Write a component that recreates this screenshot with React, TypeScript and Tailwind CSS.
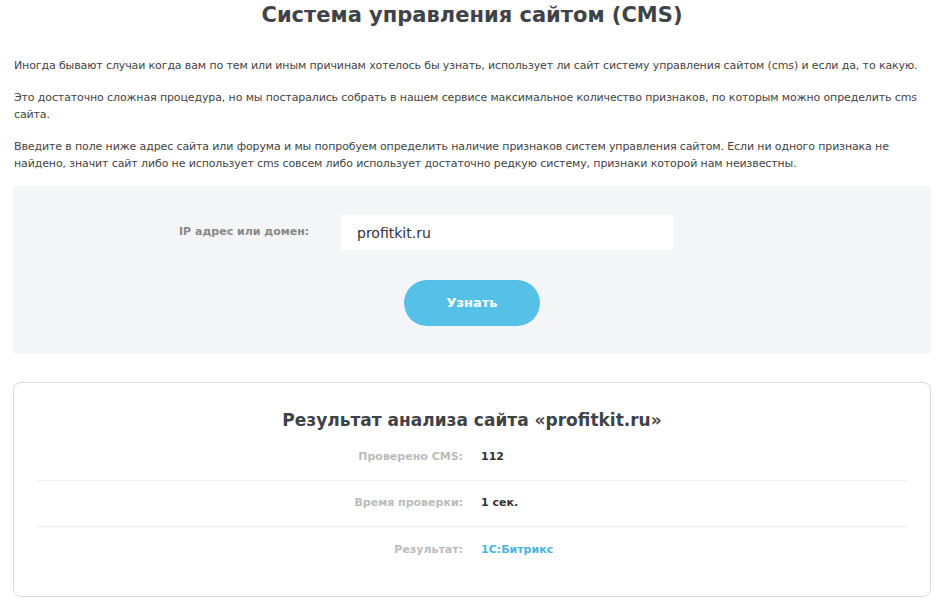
import { useState } from 'react'

const font = { fontFamily: '"DejaVu Sans", "Open Sans", sans-serif' }

const rows = [
  { label: 'Проверено CMS:', value: '112', link: false },
  { label: 'Время проверки:', value: '1 сек.', link: false },
  { label: 'Результат:', value: '1С:Битрикс', link: true },
]

export default function App() {
  const [domain, setDomain] = useState('profitkit.ru')

  return (
    <div className="min-h-screen bg-white text-[#444]" style={font}>
      <div className="pl-[13px] pr-[9px]">
        <h1 className="pt-[1px] text-center text-[21px] font-bold leading-[28px] text-[#3f4247]">
          Система управления сайтом (CMS)
        </h1>

        <div className="mt-[28px] flex flex-col gap-[15px] pl-[1px] pr-[4px] text-[11px] leading-[17px] tracking-[-0.12px] text-[#444]">
          <p>
            Иногда бывают случаи когда вам по тем или иным причинам хотелось бы узнать, использует ли
            сайт систему управления сайтом (cms) и если да, то какую.
          </p>
          <p>
            Это достаточно сложная процедура, но мы постарались собрать в нашем сервисе максимальное
            количество признаков, по которым можно определить cms сайта.
          </p>
          <p>
            Введите в поле ниже адрес сайта или форума и мы попробуем определить наличие признаков систем
            управления сайтом. Если ни одного признака не найдено, значит сайт либо не использует cms
            совсем либо использует достаточно редкую систему, признаки которой нам неизвестны.
          </p>
        </div>

        <div className="mt-[14px] flex flex-col items-center rounded-[4px] bg-[#f4f5f6] pt-[29px] pb-[28px]">
          <div className="flex items-center self-start pl-[166px]">
            <label className="w-[162px] text-[11px] font-semibold text-[#888]">IP адрес или домен:</label>
            <input
              value={domain}
              onChange={(e) => setDomain(e.target.value)}
              className="h-[35px] w-[332px] bg-white px-[16px] text-[14px] text-[#333] outline-none"
            />
          </div>
          <button className="mt-[30px] h-[46px] w-[136px] rounded-full bg-[#56c1e7] text-[13px] font-bold text-white">
            Узнать
          </button>
        </div>

        <div className="mt-[28px] rounded-[8px] border border-[#dcdcdc] bg-white px-[23px] pt-[24px] pb-[23px]">
          <h2 className="text-center text-[17px] font-bold leading-[26px] text-[#3f4247]">
            Результат анализа сайта «profitkit.ru»
          </h2>
          <div className="mt-[2px] flex flex-col">
            {rows.map((row, i) => (
              <div
                key={i}
                className={
                  i < rows.length - 1
                    ? 'flex h-[46px] items-center border-b border-[#eeeeee]'
                    : 'flex h-[46px] items-center'
                }
              >
                <div className="w-[444px] pr-[18px] text-right text-[11px] font-semibold text-[#bbb]">
                  {row.label}
                </div>
                <div
                  className={
                    row.link
                      ? 'text-[11px] font-bold text-[#4ab3e0]'
                      : 'text-[11px] font-bold text-[#333]'
                  }
                >
                  {row.value}
                </div>
              </div>
            ))}
          </div>
        </div>
      </div>
    </div>
  )
}
